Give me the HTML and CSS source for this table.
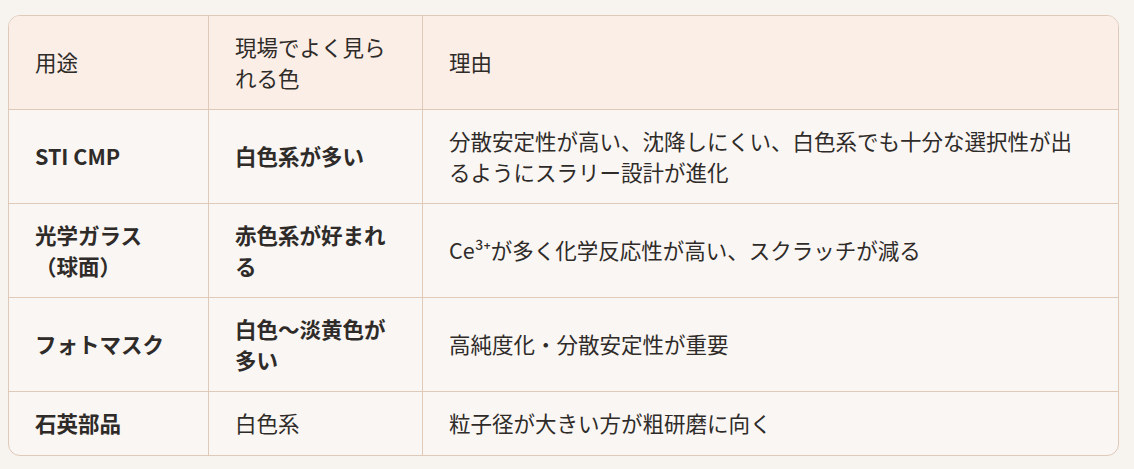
FILE: index.html
```html
<!DOCTYPE html>
<html lang="ja">
<head>
<meta charset="utf-8">
<title>用途と色</title>
<link rel="stylesheet" href="styles.css">
</head>
<body>
<div class="frame">
  <table class="grid">
    <colgroup>
      <col class="c1">
      <col class="c2">
      <col class="c3">
    </colgroup>
    <thead>
      <tr>
        <th>用途</th>
        <th>現場でよく見られる色</th>
        <th>理由</th>
      </tr>
    </thead>
    <tbody>
      <tr>
        <td class="strong">STI CMP</td>
        <td class="strong">白色系が多い</td>
        <td>分散安定性が高い、沈降しにくい、白色系でも十分な選択性が出るようにスラリー設計が進化</td>
      </tr>
      <tr>
        <td class="strong">光学ガラス（球面）</td>
        <td class="strong">赤色系が好まれる</td>
        <td>Ce³⁺が多く化学反応性が高い、スクラッチが減る</td>
      </tr>
      <tr>
        <td class="strong">フォトマスク</td>
        <td class="strong">白色〜淡黄色が多い</td>
        <td>高純度化・分散安定性が重要</td>
      </tr>
      <tr class="last">
        <td class="strong">石英部品</td>
        <td>白色系</td>
        <td>粒子径が大きい方が粗研磨に向く</td>
      </tr>
    </tbody>
  </table>
</div>
</body>
</html>
```
FILE: styles.css
```css
html, body {
  margin: 0;
  padding: 0;
  background: #f7f3ef;
}
body {
  padding: 15px 15px 13px 8px;
  font-family: "Noto Sans CJK JP", "Noto Sans", sans-serif;
  color: #2e2b29;
}
.frame {
  border: 1px solid #dfc9b8;
  border-radius: 12px;
  overflow: hidden;
  background: #faf6f3;
}
.grid {
  width: 100%;
  border-collapse: separate;
  border-spacing: 0;
  table-layout: fixed;
  font-size: 21.5px;
  line-height: 30.5px;
}
.c1 { width: 200px; }
.c2 { width: 214px; }
.grid th,
.grid td {
  padding: 16px 27px 16px 26px;
  text-align: left;
  vertical-align: middle;
  border-right: 1px solid #dfc9b8;
  border-bottom: 1px solid #dfc9b8;
  line-break: strict;
}
.grid th:last-child,
.grid td:last-child {
  border-right: none;
  padding-right: 34px;
}
.grid tr.last td {
  border-bottom: none;
}
.grid th {
  background: #fbeee6;
  font-weight: 400;
}
.grid td.strong {
  font-weight: 700;
}
```
